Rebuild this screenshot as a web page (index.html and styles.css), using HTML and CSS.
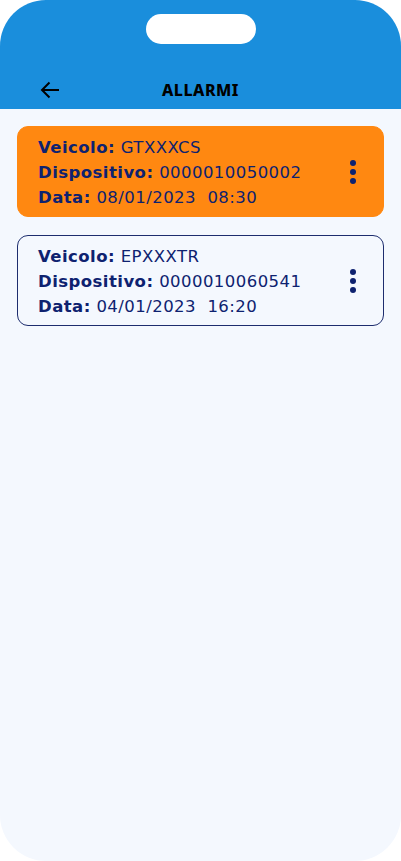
FILE: index.html
```html
<!DOCTYPE html>
<html>
<head>
  <title>Allarmi</title>
  <link rel="stylesheet" href="styles.css">
</head>
<body>
  <div class="phone">
    <div class="header">
      <div class="notch"></div>
      <div class="nav">
        <span class="back">
          <svg width="20" height="18" viewBox="0 0 20 18">
            <path d="M19 9H2M9.5 1.5L2 9l7.5 7.5" fill="none" stroke="#000" stroke-width="2"/>
          </svg>
        </span>
        <h1>ALLARMI</h1>
      </div>
    </div>

    <div class="list">
      <div class="card active">
        <div class="info">
          <p><b>Veicolo:</b> GTXXXCS</p>
          <p><b>Dispositivo:</b> 0000010050002</p>
          <p><b>Data:</b> 08/01/2023&nbsp; 08:30</p>
        </div>
        <div class="menu"><i></i><i></i><i></i></div>
      </div>

      <div class="card">
        <div class="info">
          <p><b>Veicolo:</b> EPXXXTR</p>
          <p><b>Dispositivo:</b> 0000010060541</p>
          <p><b>Data:</b> 04/01/2023&nbsp; 16:20</p>
        </div>
        <div class="menu"><i></i><i></i><i></i></div>
      </div>
    </div>
  </div>
</body>
</html>
```

FILE: styles.css
```css
* {
  box-sizing: border-box;
}
body {
  margin: 0;
  background-color: #fff;
  font-family: "Noto Sans", Arial, sans-serif;
}
.phone {
  width: 401px;
  height: 861px;
  border-radius: 46px;
  overflow: hidden;
  background-color: #f4f8fe;
}
.header {
  height: 109px;
  background-color: #1a8edc;
  padding-top: 14px;
}
.notch {
  width: 110px;
  height: 30px;
  margin: 0 auto;
  background-color: #fff;
  border-radius: 15px;
}
.nav {
  position: relative;
  height: 30px;
  margin-top: 31px;
  display: flex;
  align-items: center;
  justify-content: center;
}
.back {
  position: absolute;
  left: 40px;
  top: 6px;
  display: flex;
}
.nav h1 {
  margin: 0;
  font-size: 16px;
  font-weight: 800;
  letter-spacing: 0.5px;
  color: #000;
}
.list {
  padding: 17px 17px;
  display: flex;
  flex-direction: column;
  gap: 18px;
}
.card {
  height: 91px;
  border-radius: 11px;
  border: 1px solid #1d2d6e;
  padding: 8px 20px 0 20px;
  display: flex;
  align-items: center;
  justify-content: space-between;
}
.card.active {
  background-color: #ff8811;
  border-color: #ff8811;
}
.info {
  align-self: flex-start;
}
.info p {
  margin: 0;
  font-family: "DejaVu Sans", sans-serif;
  font-size: 16.5px;
  line-height: 25px;
  letter-spacing: 0.45px;
  color: #0e2270;
  white-space: nowrap;
}
.info b {
  font-weight: 700;
}
.menu {
  display: flex;
  flex-direction: column;
  gap: 3px;
  margin-right: 7px;
  margin-top: -8px;
}
.menu i {
  width: 6px;
  height: 6px;
  border-radius: 50%;
  background-color: #0e2270;
}
```
